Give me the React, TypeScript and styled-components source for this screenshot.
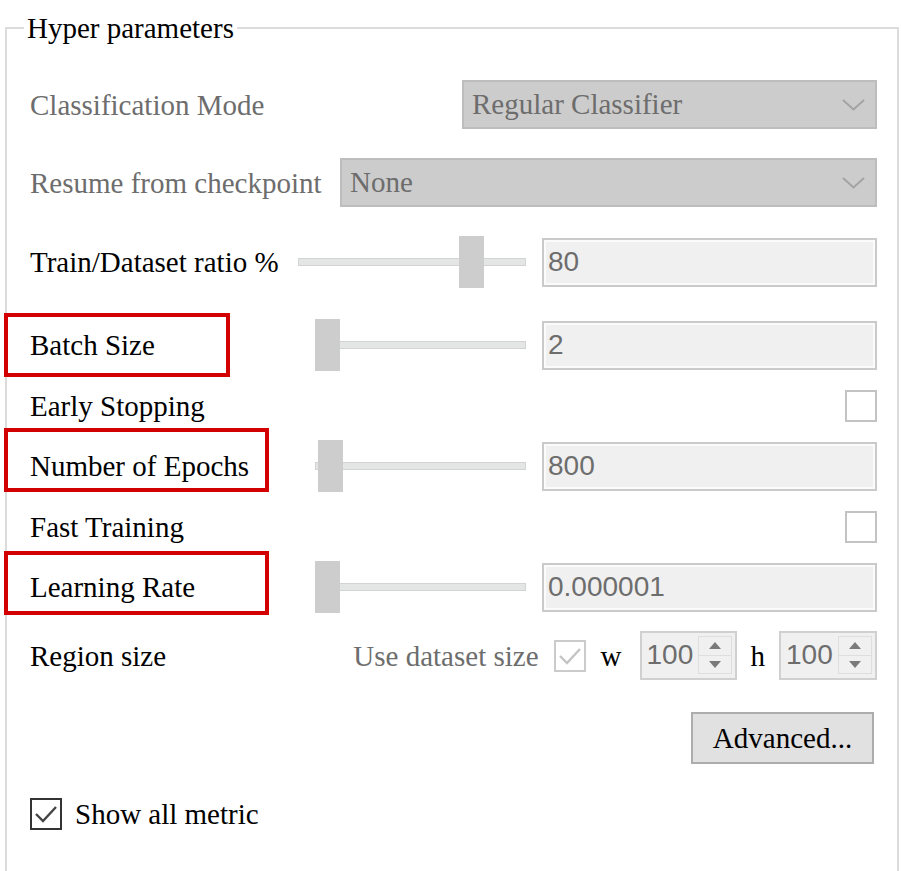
import React from "react";
import styled, { createGlobalStyle } from "styled-components";

const Global = createGlobalStyle`
  html, body { margin: 0; padding: 0; background: #ffffff; }
  body { font-family: "Liberation Serif", "Times New Roman", serif; overflow: hidden; }
  #root { width: 902px; height: 871px; overflow: hidden; }
`;

const Page = styled.div`
  width: 902px;
  height: 871px;
  box-sizing: border-box;
  padding: 11px 0 0 5px;
  overflow: hidden;
`;

const Group = styled.fieldset`
  margin: 0;
  width: 894px;
  min-height: 900px;
  box-sizing: border-box;
  border: 2px solid #dcdcdc;
  border-bottom: none;
  padding: 0 20px 0 23px;
  display: flex;
  flex-direction: column;
`;

const Legend = styled.legend`
  margin-left: -6px;
  padding: 0 3px;
  font-size: 29px;
  line-height: 34px;
  color: #000;
`;

const Row = styled.div<{ $h: number; $mt: number }>`
  display: flex;
  align-items: center;
  height: ${(p) => p.$h}px;
  margin-top: ${(p) => p.$mt}px;
`;

const Label = styled.span<{ $disabled?: boolean; $box?: number; $shift?: number }>`
  position: relative;
  font-size: 29px;
  line-height: 34px;
  white-space: nowrap;
  color: ${(p) => (p.$disabled ? "#6d6d6d" : "#000")};
  ${(p) =>
    p.$box
      ? `&::after {
    content: "";
    position: absolute;
    left: -26px;
    top: 50%;
    width: ${p.$box}px;
    height: 64px;
    transform: translateY(calc(-50% + ${p.$shift ?? 0}px));
    box-sizing: border-box;
    border: 4px solid #d20000;
  }`
      : ""}
`;

const Combo = styled.div<{ $w: number }>`
  margin-left: auto;
  width: ${(p) => p.$w}px;
  height: 49px;
  box-sizing: border-box;
  background: #cccccc;
  border: 2px solid #bdbdbd;
  display: flex;
  align-items: center;
  padding: 0 10px 0 8px;
  font-size: 29px;
  color: #6d6d6d;
`;

const ComboText = styled.span`
  flex: 1;
  white-space: nowrap;
`;

const Chevron = () => (
  <svg width="23" height="12" viewBox="0 0 23 12">
    <polyline points="1,1 11.5,10.5 22,1" fill="none" stroke="#a3a3a3" strokeWidth="2" />
  </svg>
);

const SliderGroup = styled.div`
  margin-left: auto;
  display: flex;
  align-items: center;
  gap: 16px;
`;

const Slider = styled.div<{ $w: number }>`
  position: relative;
  width: ${(p) => p.$w}px;
  height: 52px;
  display: flex;
  align-items: center;
`;

const Track = styled.div`
  width: 100%;
  height: 8px;
  box-sizing: border-box;
  background: #e4e6e6;
  border: 1px solid #d2d3d3;
`;

const Thumb = styled.div`
  position: absolute;
  top: 0;
  width: 25px;
  height: 52px;
  background: #cdcdcd;
`;

const TextBox = styled.div`
  width: 335px;
  height: 49px;
  box-sizing: border-box;
  border: 2px solid #cacaca;
  box-shadow: inset 0 0 0 2px #fbfbfb;
  background: #f0f0f0;
  display: flex;
  align-items: center;
  padding-left: 4px;
  font-family: "Liberation Sans", Arial, sans-serif;
  font-size: 28px;
  color: #6d6d6d;
`;

const Box = styled.div<{ $tone: "empty" | "disabled" | "on"; $auto?: boolean }>`
  ${(p) => (p.$auto ? "margin-left: auto;" : "")}
  width: 32px;
  height: 32px;
  flex: none;
  box-sizing: border-box;
  background: #fff;
  border: 2px solid
    ${(p) => (p.$tone === "on" ? "#333333" : p.$tone === "disabled" ? "#cbcbcb" : "#c3c3c3")};
  display: flex;
  align-items: center;
  justify-content: center;
`;

const Check = ({ color }: { color: string }) => (
  <svg width="26" height="26" viewBox="0 0 26 26">
    <polyline points="3,13 10,20 23,6" fill="none" stroke={color} strokeWidth="2.4" />
  </svg>
);

const RegionControls = styled.div`
  margin-left: auto;
  display: flex;
  align-items: center;
`;

const SmallText = styled.span<{ $ml: number; $disabled?: boolean }>`
  margin-left: ${(p) => p.$ml}px;
  font-size: 29px;
  line-height: 34px;
  white-space: nowrap;
  color: ${(p) => (p.$disabled ? "#6d6d6d" : "#000")};
`;

const Spin = styled.div<{ $w: number; $ml: number }>`
  margin-left: ${(p) => p.$ml}px;
  width: ${(p) => p.$w}px;
  height: 49px;
  box-sizing: border-box;
  border: 2px solid #d0d0d0;
  background: #f0f0f0;
  display: flex;
  align-items: center;
  padding: 3px 3px 4px 5px;
`;

const SpinValue = styled.span`
  flex: 1;
  font-family: "Liberation Sans", Arial, sans-serif;
  font-size: 28px;
  color: #6d6d6d;
`;

const SpinButtons = styled.div`
  width: 34px;
  height: 38px;
  display: flex;
  flex-direction: column;
  border: 1px solid #dedede;
  box-sizing: border-box;
`;

const SpinButton = styled.div<{ $top?: boolean }>`
  flex: 1;
  display: flex;
  align-items: center;
  justify-content: center;
  ${(p) => (p.$top ? "border-bottom: 1px solid #dedede;" : "")}
`;

const Arrow = ({ up }: { up?: boolean }) => (
  <svg width="12" height="7" viewBox="0 0 12 7">
    <polygon points={up ? "0,7 6,0 12,7" : "0,0 12,0 6,7"} fill="#7a7a7a" />
  </svg>
);

const Button = styled.div`
  margin-left: auto;
  margin-right: 3px;
  width: 183px;
  height: 52px;
  box-sizing: border-box;
  background: #e1e1e1;
  border: 2px solid #adadad;
  display: flex;
  align-items: center;
  justify-content: center;
  font-size: 29px;
  color: #000;
`;

const CheckLabel = styled.span`
  margin-left: 13px;
  font-size: 29px;
  color: #000;
`;

const SpinBox = ({ w, ml }: { w: number; ml: number }) => (
  <Spin $w={w} $ml={ml}>
    <SpinValue>100</SpinValue>
    <SpinButtons>
      <SpinButton $top>
        <Arrow up />
      </SpinButton>
      <SpinButton>
        <Arrow />
      </SpinButton>
    </SpinButtons>
  </Spin>
);

const SliderRow = ({
  label,
  box,
  shift,
  mt,
  trackW,
  thumbLeft,
  value,
}: {
  label: string;
  box?: number;
  shift?: number;
  mt: number;
  trackW: number;
  thumbLeft: number;
  value: string;
}) => (
  <Row $h={52} $mt={mt}>
    <Label $box={box} $shift={shift}>
      {label}
    </Label>
    <SliderGroup>
      <Slider $w={trackW}>
        <Track />
        <Thumb style={{ left: thumbLeft }} />
      </Slider>
      <TextBox>{value}</TextBox>
    </SliderGroup>
  </Row>
);

export default function App() {
  return (
    <Page>
      <Global />
      <Group>
        <Legend>Hyper parameters</Legend>
        <Row $h={49} $mt={35}>
          <Label $disabled>Classification Mode</Label>
          <Combo $w={415}>
            <ComboText>Regular Classifier</ComboText>
            <Chevron />
          </Combo>
        </Row>
        <Row $h={49} $mt={29}>
          <Label $disabled>Resume from checkpoint</Label>
          <Combo $w={537}>
            <ComboText>None</ComboText>
            <Chevron />
          </Combo>
        </Row>
        <SliderRow label="Train/Dataset ratio %" mt={29} trackW={228} thumbLeft={161} value="80" />
        <SliderRow label="Batch Size" box={226} mt={31} trackW={211} thumbLeft={0} value="2" />
        <Row $h={32} $mt={19}>
          <Label>Early Stopping</Label>
          <Box $tone="empty" $auto />
        </Row>
        <SliderRow label="Number of Epochs" box={265} shift={-6} mt={18} trackW={211} thumbLeft={3} value="800" />
        <Row $h={32} $mt={19}>
          <Label>Fast Training</Label>
          <Box $tone="empty" $auto />
        </Row>
        <SliderRow label="Learning Rate" box={265} shift={-4} mt={18} trackW={211} thumbLeft={0} value="0.000001" />
        <Row $h={49} $mt={18}>
          <Label>Region size</Label>
          <RegionControls>
            <SmallText $ml={0} $disabled>
              Use dataset size
            </SmallText>
            <Box $tone="disabled" style={{ marginLeft: 15 }}>
              <Check color="#c4c4c4" />
            </Box>
            <SmallText $ml={15}>w</SmallText>
            <SpinBox w={97} ml={18} />
            <SmallText $ml={14}>h</SmallText>
            <SpinBox w={98} ml={14} />
          </RegionControls>
        </Row>
        <Row $h={52} $mt={32}>
          <Button>Advanced...</Button>
        </Row>
        <Row $h={32} $mt={34}>
          <Box $tone="on">
            <Check color="#444444" />
          </Box>
          <CheckLabel>Show all metric</CheckLabel>
        </Row>
      </Group>
    </Page>
  );
}
